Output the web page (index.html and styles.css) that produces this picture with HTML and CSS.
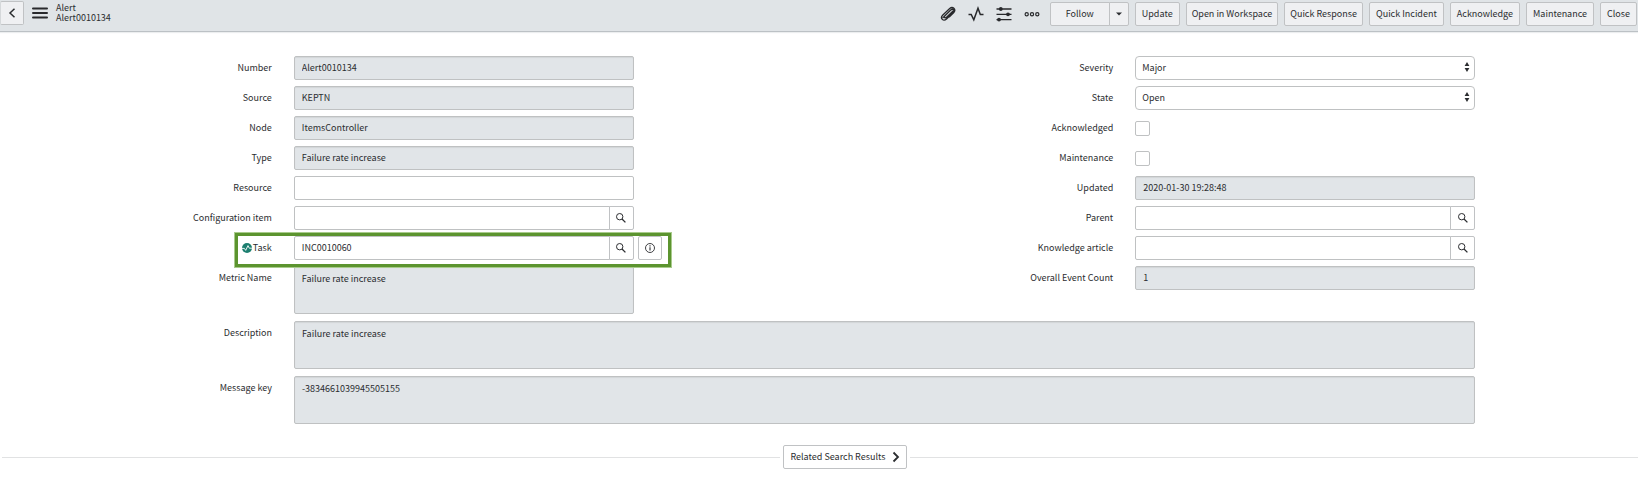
FILE: index.html
```html
<!DOCTYPE html>
<html lang="en">
<head>
<meta charset="utf-8">
<title>Alert0010134 | Alert</title>
<link rel="stylesheet" href="styles.css">
</head>
<body>
<svg class="sprite" aria-hidden="true">
  <symbol id="search" viewBox="0 0 12 12"><circle cx="4.7" cy="4.7" r="3.2" fill="none" stroke="currentColor" stroke-width="1"/><path d="M7 7l3.400 3.400" stroke="currentColor" stroke-width="1.300"/></symbol>
  <symbol id="updown" viewBox="0 0 6 10"><path d="M3 0l2.400 4H.6zM3 10L.6 6h4.800z" fill="currentColor"/></symbol>
</svg>
<header class="topbar">
  <button class="btn back" aria-label="Back"><svg width="8" height="10" viewBox="0 0 8 10"><path d="M6.500 .7L2 5l4.500 4.300" fill="none" stroke="currentColor" stroke-width="1.500"/></svg></button>
  <button class="icon menu" aria-label="Menu"><svg width="16" height="12" viewBox="0 0 16 12"><path d="M1 1.500h14M1 6h14M1 10.500h14" stroke="currentColor" stroke-width="2" stroke-linecap="round"/></svg></button>
  <h1 class="title">Alert<br>Alert0010134</h1>
  <div class="icons">
    <button class="icon" aria-label="Attachments"><svg width="16" height="16" viewBox="0 0 16 16"><path d="M12.800 5.300L6.600 11.300c-1.500 1.400-3-.2-1.700-1.500L10.700 4M4.900 9.800L3 11.600M10.700 4c2.100-1.900 4.400.5 2.500 2.500L6.500 13c-3.100 2.900-6.800-.7-3.900-3.800L9.700 2.500c3-2.600 6.800.8 4.100 4L9.500 10.800" fill="none" stroke="currentColor" stroke-width="1.300" stroke-linecap="round"/></svg></button>
    <button class="icon" aria-label="Activity"><svg width="16" height="16" viewBox="0 0 16 16"><path d="M.5 8.500h2.700l2.600 5.300L10 2.200l2.300 6.300h3.200" fill="none" stroke="currentColor" stroke-width="1.500"/></svg></button>
    <button class="icon" aria-label="Personalize form"><svg width="16" height="16" viewBox="0 0 16 16"><path d="M.5 3h15M.5 8.300h15M.5 13.600h15" stroke="currentColor" stroke-width="1.300"/><g fill="currentColor"><circle cx="4.800" cy="3" r="1.900"/><circle cx="12" cy="8.300" r="1.900"/><circle cx="3" cy="13.600" r="1.900"/></g></svg></button>
    <button class="icon" aria-label="More options"><svg width="16" height="16" viewBox="0 0 16 16"><g fill="none" stroke="currentColor" stroke-width="1.200"><circle cx="2.700" cy="8.200" r="1.600"/><circle cx="8" cy="8.200" r="1.600"/><circle cx="13.300" cy="8.200" r="1.600"/></g></svg></button>
  </div>
  <div class="actions">
    <div class="split"><button class="btn follow">Follow</button><button class="btn caret" aria-label="Follow options"><svg width="6" height="4" viewBox="0 0 6 4"><path d="M0 .5h6L3 3.500z" fill="currentColor"/></svg></button></div>
    <button class="btn">Update</button>
    <button class="btn compact">Open in Workspace</button>
    <button class="btn compact">Quick Response</button>
    <button class="btn">Quick Incident</button>
    <button class="btn">Acknowledge</button>
    <button class="btn">Maintenance</button>
    <button class="btn">Close</button>
  </div>
</header>
<main>
  <form class="form">
    <div class="column">
      <div class="row"><label for="number">Number</label><input class="field" id="number" value="Alert0010134" readonly></div>
      <div class="row"><label for="source">Source</label><input class="field" id="source" value="KEPTN" readonly></div>
      <div class="row"><label for="node">Node</label><input class="field" id="node" value="ItemsController" readonly></div>
      <div class="row"><label for="type">Type</label><input class="field" id="type" value="Failure rate increase" readonly></div>
      <div class="row"><label for="resource">Resource</label><input class="field" id="resource"></div>
      <div class="row"><label for="ci">Configuration item</label>
        <div class="lookup"><div class="group"><input class="field" id="ci"><button type="button" class="btn find" aria-label="Look up configuration item"><svg width="12" height="12"><use href="#search"/></svg></button></div></div></div>
      <div class="row marked"><label for="task"><svg class="pulse" width="10" height="10" viewBox="0 0 10 10"><circle cx="5" cy="5" r="5" fill="#1d7f70"/><path d="M0 5.400h2.400l1.300 2L6 2.600l1.300 2.600H10" fill="none" stroke="#fff" stroke-width=".9"/></svg>Task</label>
        <div class="lookup"><div class="group"><input class="field" id="task" value="INC0010060"><button type="button" class="btn find" aria-label="Look up task"><svg width="12" height="12"><use href="#search"/></svg></button></div><button type="button" class="btn info" aria-label="Preview task"><svg width="12" height="12" viewBox="0 0 12 12"><circle cx="6" cy="6" r="4.500" fill="none" stroke="currentColor" stroke-width=".9"/><path d="M6 5.200v3.300M6 3.200v1.200" stroke="currentColor" stroke-width="1.100"/></svg></button></div></div>
      <div class="row"><label for="metric">Metric Name</label><textarea class="field" id="metric" readonly>Failure rate increase</textarea></div>
    </div>
    <div class="column">
      <div class="row"><label for="severity">Severity</label><div class="select"><select class="field" id="severity"><option>Major</option></select><svg width="6" height="10"><use href="#updown"/></svg></div></div>
      <div class="row"><label for="state">State</label><div class="select"><select class="field" id="state"><option>Open</option></select><svg width="6" height="10"><use href="#updown"/></svg></div></div>
      <div class="row"><label for="ack">Acknowledged</label><input type="checkbox" class="check" id="ack"></div>
      <div class="row"><label for="maint">Maintenance</label><input type="checkbox" class="check" id="maint"></div>
      <div class="row"><label for="updated">Updated</label><input class="field" id="updated" value="2020-01-30 19:28:48" readonly></div>
      <div class="row"><label for="parent">Parent</label>
        <div class="lookup"><div class="group"><input class="field" id="parent"><button type="button" class="btn find" aria-label="Look up parent"><svg width="12" height="12"><use href="#search"/></svg></button></div></div></div>
      <div class="row"><label for="article">Knowledge article</label>
        <div class="lookup"><div class="group"><input class="field" id="article"><button type="button" class="btn find" aria-label="Look up knowledge article"><svg width="12" height="12"><use href="#search"/></svg></button></div></div></div>
      <div class="row"><label for="count">Overall Event Count</label><input class="field" id="count" value="1" readonly></div>
    </div>
    <div class="row wide"><label for="description">Description</label><textarea class="field" id="description" readonly>Failure rate increase</textarea></div>
    <div class="row wide"><label for="key">Message key</label><textarea class="field" id="key" readonly>-3834661039945505155</textarea></div>
  </form>
  <div class="related"><button class="btn results">Related Search Results<svg width="8" height="12" viewBox="0 0 8 12"><path d="M1.500 1.500L6 6l-4.500 4.500" fill="none" stroke="currentColor" stroke-width="1.800"/></svg></button></div>
</main>
</body>
</html>
```
FILE: styles.css
```css
* { box-sizing: border-box; }
body, button, input, select, textarea {
  font-family: "Noto Sans CJK SC", "Noto Sans", sans-serif;
  font-size: 9px;
  line-height: 12px;
  color: #2b2d30;
}
body { margin: 0; background: #fff; }
svg { display: block; flex: none; }
.sprite { position: absolute; width: 0; height: 0; }

.topbar {
  display: flex;
  align-items: flex-start;
  min-height: 32px;
  padding: 2px 1px 0 0;
  background: #e0e4e7;
  border-bottom: 1px solid #bcc1c5;
  box-shadow: 0 1px 1px #eceeef;
}
.btn {
  display: flex;
  align-items: center;
  justify-content: center;
  height: 24px;
  margin: 0;
  padding: 0 6px;
  border: 1px solid #c0c2c4;
  border-radius: 2px;
  background: #eff0f2;
  white-space: nowrap;
}
.compact { padding: 0 5px; }
.icon { border: 0; padding: 0; margin: 0; background: none; color: #28292c; }
.back { width: 24px; margin-top: -1px; border-left-color: #d5d8da; }
.menu { margin: 5px 8px 0 8px; }
.title { margin: 0; padding-top: 1px; font-size: 9px; line-height: 10px; font-weight: 400; }
.icons { display: flex; gap: 12px; margin: 4px 10px 0 auto; }
.actions { display: flex; gap: 6px; }
.split { display: flex; }
.follow { width: 60px; border-radius: 2px 0 0 2px; }
.caret { width: 20px; margin-left: -1px; border-radius: 0 2px 2px 0; }

.form {
  display: grid;
  grid-template-columns: 1fr 1fr;
  column-gap: 14.1%;
  row-gap: 7px;
  width: 90.05%;
  padding-top: 24px;
}
.column { display: flex; flex-direction: column; gap: 6px; min-width: 0; }
.row {
  display: grid;
  grid-template-columns: 42.9% 1fr;
  column-gap: 22px;
  align-items: center;
  position: relative;
  min-height: 24px;
}
.wide { grid-column: 1 / -1; grid-template-columns: 18.44% 1fr; }
label {
  display: flex;
  align-items: center;
  justify-content: flex-end;
  align-self: start;
  height: 24px;
}
.pulse { margin-right: 1px; }
.field {
  display: block;
  width: 100%;
  min-width: 0;
  height: 24px;
  margin: 0;
  padding: 0 7px 1px;
  border: 1px solid #bfc1c2;
  border-radius: 2px;
  background: #fff;
  outline: 0;
}
.field:read-only:not(select) { background: #e1e5e8; box-shadow: inset 0 1px 1px #d2d5d8; }
textarea.field { height: 48px; padding-top: 6px; resize: none; }
.select { display: flex; align-items: center; position: relative; }
select.field { appearance: none; padding: 0 6px; border-radius: 4px; }
.select svg { position: absolute; right: 5px; top: 6px; pointer-events: none; }
.check {
  appearance: none;
  width: 15px;
  height: 15px;
  margin: 0;
  border: 1px solid #bfc1c2;
  border-radius: 2px;
}
.lookup { display: flex; gap: 4px; min-width: 0; }
.group { display: flex; flex: 0 0 100%; }
.group .field { border-radius: 2px 0 0 2px; }
.find { flex: none; width: 25px; margin-left: -1px; padding: 0; background: #fff; border-radius: 0 2px 2px 0; }
.info { flex: none; width: 24px; padding: 0; background: #fff; }
.marked::after {
  content: "";
  position: absolute;
  z-index: 1;
  inset: -3px -37px -7px calc(42.9% - 37px);
  border: 3px solid #5c942f;
  outline: 1px solid #a9cb8c;
  pointer-events: none;
}

.related {
  display: flex;
  align-items: center;
  gap: 3px;
  margin: 21px 0 0 2px;
}
.related::before, .related::after { content: ""; flex: 1; height: 1px; background: #e1e2e3; }
.related::before { flex-grow: 1.07; }
.results { gap: 7px; padding: 0 6px; background: #fff; }
```
